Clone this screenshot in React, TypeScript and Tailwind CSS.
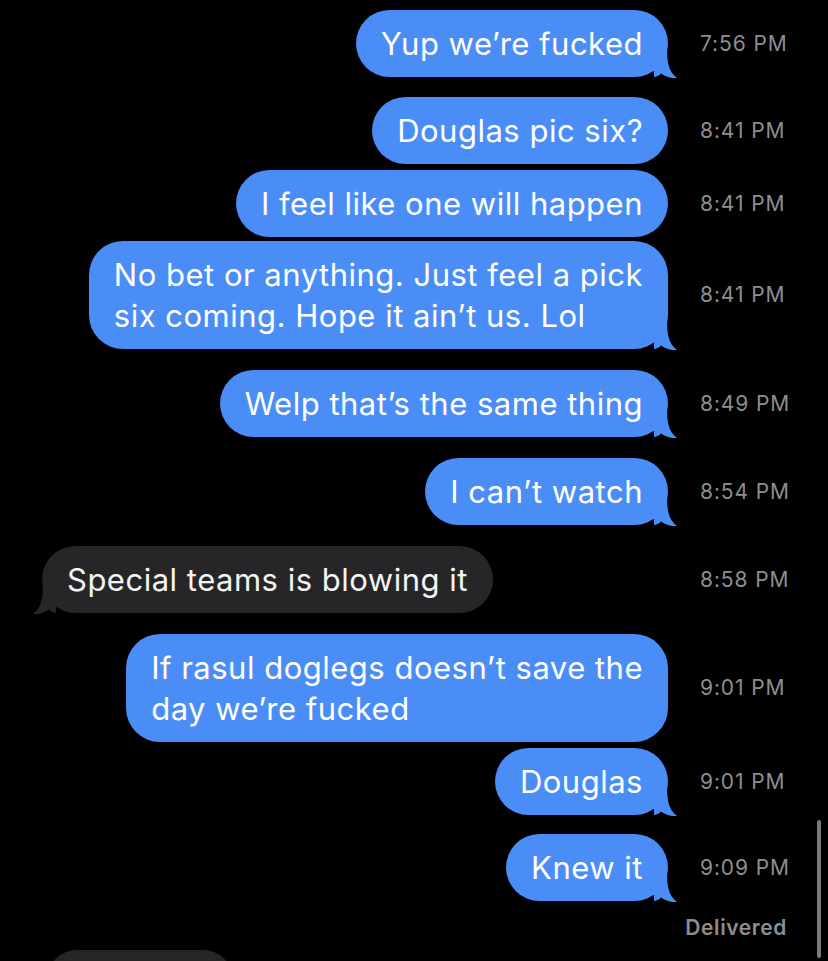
import * as React from "react";

type Msg = {
  lines: string[];
  time: string;
  mine: boolean;
  tail: boolean;
  mt: string;
};

const messages: Msg[] = [
  { lines: ["Yup we’re fucked"], time: "7:56 PM", mine: true, tail: true, mt: "mt-[10px]" },
  { lines: ["Douglas pic six?"], time: "8:41 PM", mine: true, tail: false, mt: "mt-[20px]" },
  { lines: ["I feel like one will happen"], time: "8:41 PM", mine: true, tail: false, mt: "mt-[6px]" },
  {
    lines: ["No bet or anything. Just feel a pick", "six coming. Hope it ain’t us. Lol"],
    time: "8:41 PM",
    mine: true,
    tail: true,
    mt: "mt-[4px]",
  },
  { lines: ["Welp that’s the same thing"], time: "8:49 PM", mine: true, tail: true, mt: "mt-[21px]" },
  { lines: ["I can’t watch"], time: "8:54 PM", mine: true, tail: true, mt: "mt-[21px]" },
  { lines: ["Special teams is blowing it"], time: "8:58 PM", mine: false, tail: true, mt: "mt-[21px]" },
  {
    lines: ["If rasul doglegs doesn’t save the", "day we’re fucked"],
    time: "9:01 PM",
    mine: true,
    tail: false,
    mt: "mt-[21px]",
  },
  { lines: ["Douglas"], time: "9:01 PM", mine: true, tail: true, mt: "mt-[6px]" },
  { lines: ["Knew it"], time: "9:09 PM", mine: true, tail: true, mt: "mt-[19px]" },
];

function Tail({ mine }: { mine: boolean }) {
  // little iMessage tail hanging off the bottom corner
  return (
    <svg
      width="26"
      height="30"
      viewBox="0 0 26 30"
      className={
        mine
          ? "absolute right-[-12px] bottom-[-1px]"
          : "absolute left-[-12px] bottom-[-1px] -scale-x-100"
      }
    >
      <path
        d="M0 0 L13 0 C13 15 15 24 23 30 C17 30.5 12 29 7 25.5 C5 27.5 2 29 0 29 Z"
        fill={mine ? "#4b8df7" : "#262628"}
      />
    </svg>
  );
}

function Bubble({ m }: { m: Msg }) {
  return (
    <div
      className={`relative rounded-[34px] px-[25px] py-[13px] text-[31px] leading-[41px] tracking-[0.5px] whitespace-nowrap ${
        m.mine ? "bg-[#4b8df7] text-white" : "bg-[#262628] text-[#f4f4f4]"
      }`}
    >
      {m.lines.map((l, i) => (
        <div key={i}>{l}</div>
      ))}
      {m.tail && <Tail mine={m.mine} />}
    </div>
  );
}

export default function App() {
  return (
    <div
      className="relative w-[828px] h-[961px] bg-black overflow-hidden"
      style={{ fontFamily: "Inter, 'Noto Sans', sans-serif" }}
    >
      {messages.map((m, i) => (
        <div key={i} className={`flex items-center ${m.mt}`}>
          <div className={`w-[668px] flex ${m.mine ? "justify-end" : "justify-start pl-[42px]"}`}>
            <Bubble m={m} />
          </div>
          <div className="ml-[32px] text-[21px] text-[#8d8d92] tracking-[0.9px]">{m.time}</div>
        </div>
      ))}

      <div className="flex justify-end pr-[41px] mt-[13px]">
        <span className="text-[21px] leading-[28px] font-semibold text-[#8d8d92] tracking-[0.6px]">
          Delivered
        </span>
      </div>

      <div className="mt-[8px] ml-[47px] w-[186px] h-[60px] rounded-[30px] bg-[#262628]" />

      {/* scroll indicator */}
      <div className="absolute right-[7px] top-[820px] w-[4px] h-[138px] rounded-full bg-[#7b7b7f]" />
    </div>
  );
}
